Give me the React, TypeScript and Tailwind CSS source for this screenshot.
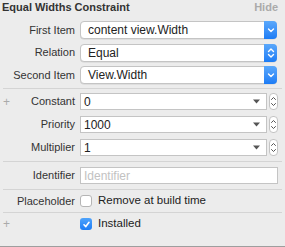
import React from "react";

const font = { fontFamily: '"Liberation Sans", Arial, sans-serif' };

function Chevron({ up, down }: { up?: boolean; down?: boolean }) {
  return (
    <svg width="8" height="12" viewBox="0 0 8 12" fill="none" stroke="white" strokeWidth="1.4" strokeLinecap="round" strokeLinejoin="round">
      {up && <path d="M1.5 4.5 L4 2 L6.5 4.5" />}
      {down && <path d={up ? "M1.5 7.5 L4 10 L6.5 7.5" : "M1.5 5 L4 7.5 L6.5 5"} />}
    </svg>
  );
}

function Popup({ value, both }: { value: string; both?: boolean }) {
  return (
    <div className="flex h-[18px] w-[197px] items-stretch rounded-[4px] border border-[#c4c4c4] bg-white shadow-[0_0.5px_0.5px_rgba(0,0,0,0.12)]">
      <div className="flex flex-1 items-center pl-[7px] text-[12px] leading-none text-[#222]">{value}</div>
      <div className="-my-px -mr-px flex w-[13px] items-center justify-center rounded-r-[4px] bg-gradient-to-b from-[#5aa8fb] to-[#1b7cf5]">
        <Chevron up={both} down />
      </div>
    </div>
  );
}

function Stepper() {
  return (
    <div className="flex h-[17px] w-[9px] flex-col items-center justify-center rounded-[4px] border border-[#c4c4c4] bg-white">
      <svg width="7" height="13" viewBox="0 0 7 13" fill="none" stroke="#555" strokeWidth="1" strokeLinecap="round" strokeLinejoin="round">
        <path d="M1.5 4.5 L3.5 2.5 L5.5 4.5" />
        <path d="M1.5 8.5 L3.5 10.5 L5.5 8.5" />
      </svg>
    </div>
  );
}

function Combo({ value }: { value: string }) {
  return (
    <div className="flex items-center gap-[2px]">
      <div className="flex h-[17px] w-[187px] items-center border border-[#c4c4c4] bg-white pl-[3px] pr-[6px] text-[12px] leading-none text-[#222]">
        <span className="flex-1">{value}</span>
        <svg width="7" height="5" viewBox="0 0 7 5">
          <path d="M0 0.5 L7 0.5 L3.5 4.5 Z" fill="#555" />
        </svg>
      </div>
      <Stepper />
    </div>
  );
}

function Label({ children }: { children: React.ReactNode }) {
  return <div className="w-[75px] text-right text-[11px] leading-none text-[#333]">{children}</div>;
}

function Plus() {
  return <span className="absolute left-[3px] text-[12px] leading-none text-[#aaa]">+</span>;
}

function Checkbox({ checked }: { checked?: boolean }) {
  return checked ? (
    <div className="flex h-[12px] w-[12px] items-center justify-center rounded-[3px] bg-gradient-to-b from-[#4ea3fb] to-[#1b7cf5]">
      <svg width="9" height="9" viewBox="0 0 9 9" fill="none" stroke="white" strokeWidth="1.6" strokeLinecap="round" strokeLinejoin="round">
        <path d="M2 4.8 L3.8 6.6 L7 2.3" />
      </svg>
    </div>
  ) : (
    <div className="h-[12px] w-[12px] rounded-[3px] border border-[#b5b5b5] bg-white" />
  );
}

export default function App() {
  return (
    <div className="h-[247px] w-[285px] overflow-hidden bg-[#ececec]" style={font}>
      <div className="flex h-[247px] flex-col border-b border-[#9e9e9e]">
        <div className="flex h-[14px] items-center justify-between pl-[2px] pr-[7px] pt-[1px]">
          <span className="text-[11px] leading-none font-bold text-[#333]">Equal Widths Constraint</span>
          <span className="text-[11px] leading-none font-bold text-[#aaa]">Hide</span>
        </div>

        <div className="mt-[7px] flex flex-col gap-[4.5px]">
          {[
            ["First Item", "content view.Width", false],
            ["Relation", "Equal", true],
            ["Second Item", "View.Width", false],
          ].map(([l, v, b]) => (
            <div key={l as string} className="flex items-center gap-[5px]">
              <Label>{l}</Label>
              <Popup value={v as string} both={b as boolean} />
            </div>
          ))}
        </div>

        <div className="mx-[3px] mt-[4px] h-px bg-[#d4d4d4]" />

        <div className="mt-[4px] flex flex-col gap-[6px]">
          {[
            ["Constant", "0"],
            ["Priority", "1000"],
            ["Multiplier", "1"],
          ].map(([l, v], i) => (
            <div key={l} className="relative flex items-center gap-[5px]">
              {i === 0 && <Plus />}
              <Label>{l}</Label>
              <Combo value={v} />
            </div>
          ))}
        </div>

        <div className="mx-[3px] mt-[5px] h-px bg-[#d4d4d4]" />

        <div className="mt-[5px] flex items-center gap-[5px]">
          <Label>Identifier</Label>
          <div className="flex h-[17px] w-[198px] items-center border border-[#c4c4c4] bg-white pl-[3px] text-[12px] leading-none text-[#c2c2c2]">
            Identifier
          </div>
        </div>

        <div className="mx-[3px] mt-[5px] h-px bg-[#d4d4d4]" />

        <div className="flex h-[22px] items-center gap-[5px]">
          <Label>Placeholder</Label>
          <Checkbox />
          <span className="ml-[1px] text-[11.5px] leading-none text-[#222]">Remove at build time</span>
        </div>

        <div className="mx-[3px] h-px bg-[#d4d4d4]" />

        <div className="relative flex h-[22px] items-center gap-[5px]">
          <Plus />
          <div className="w-[75px]" />
          <Checkbox checked />
          <span className="ml-[1px] text-[11.5px] leading-none text-[#222]">Installed</span>
        </div>
      </div>
    </div>
  );
}
